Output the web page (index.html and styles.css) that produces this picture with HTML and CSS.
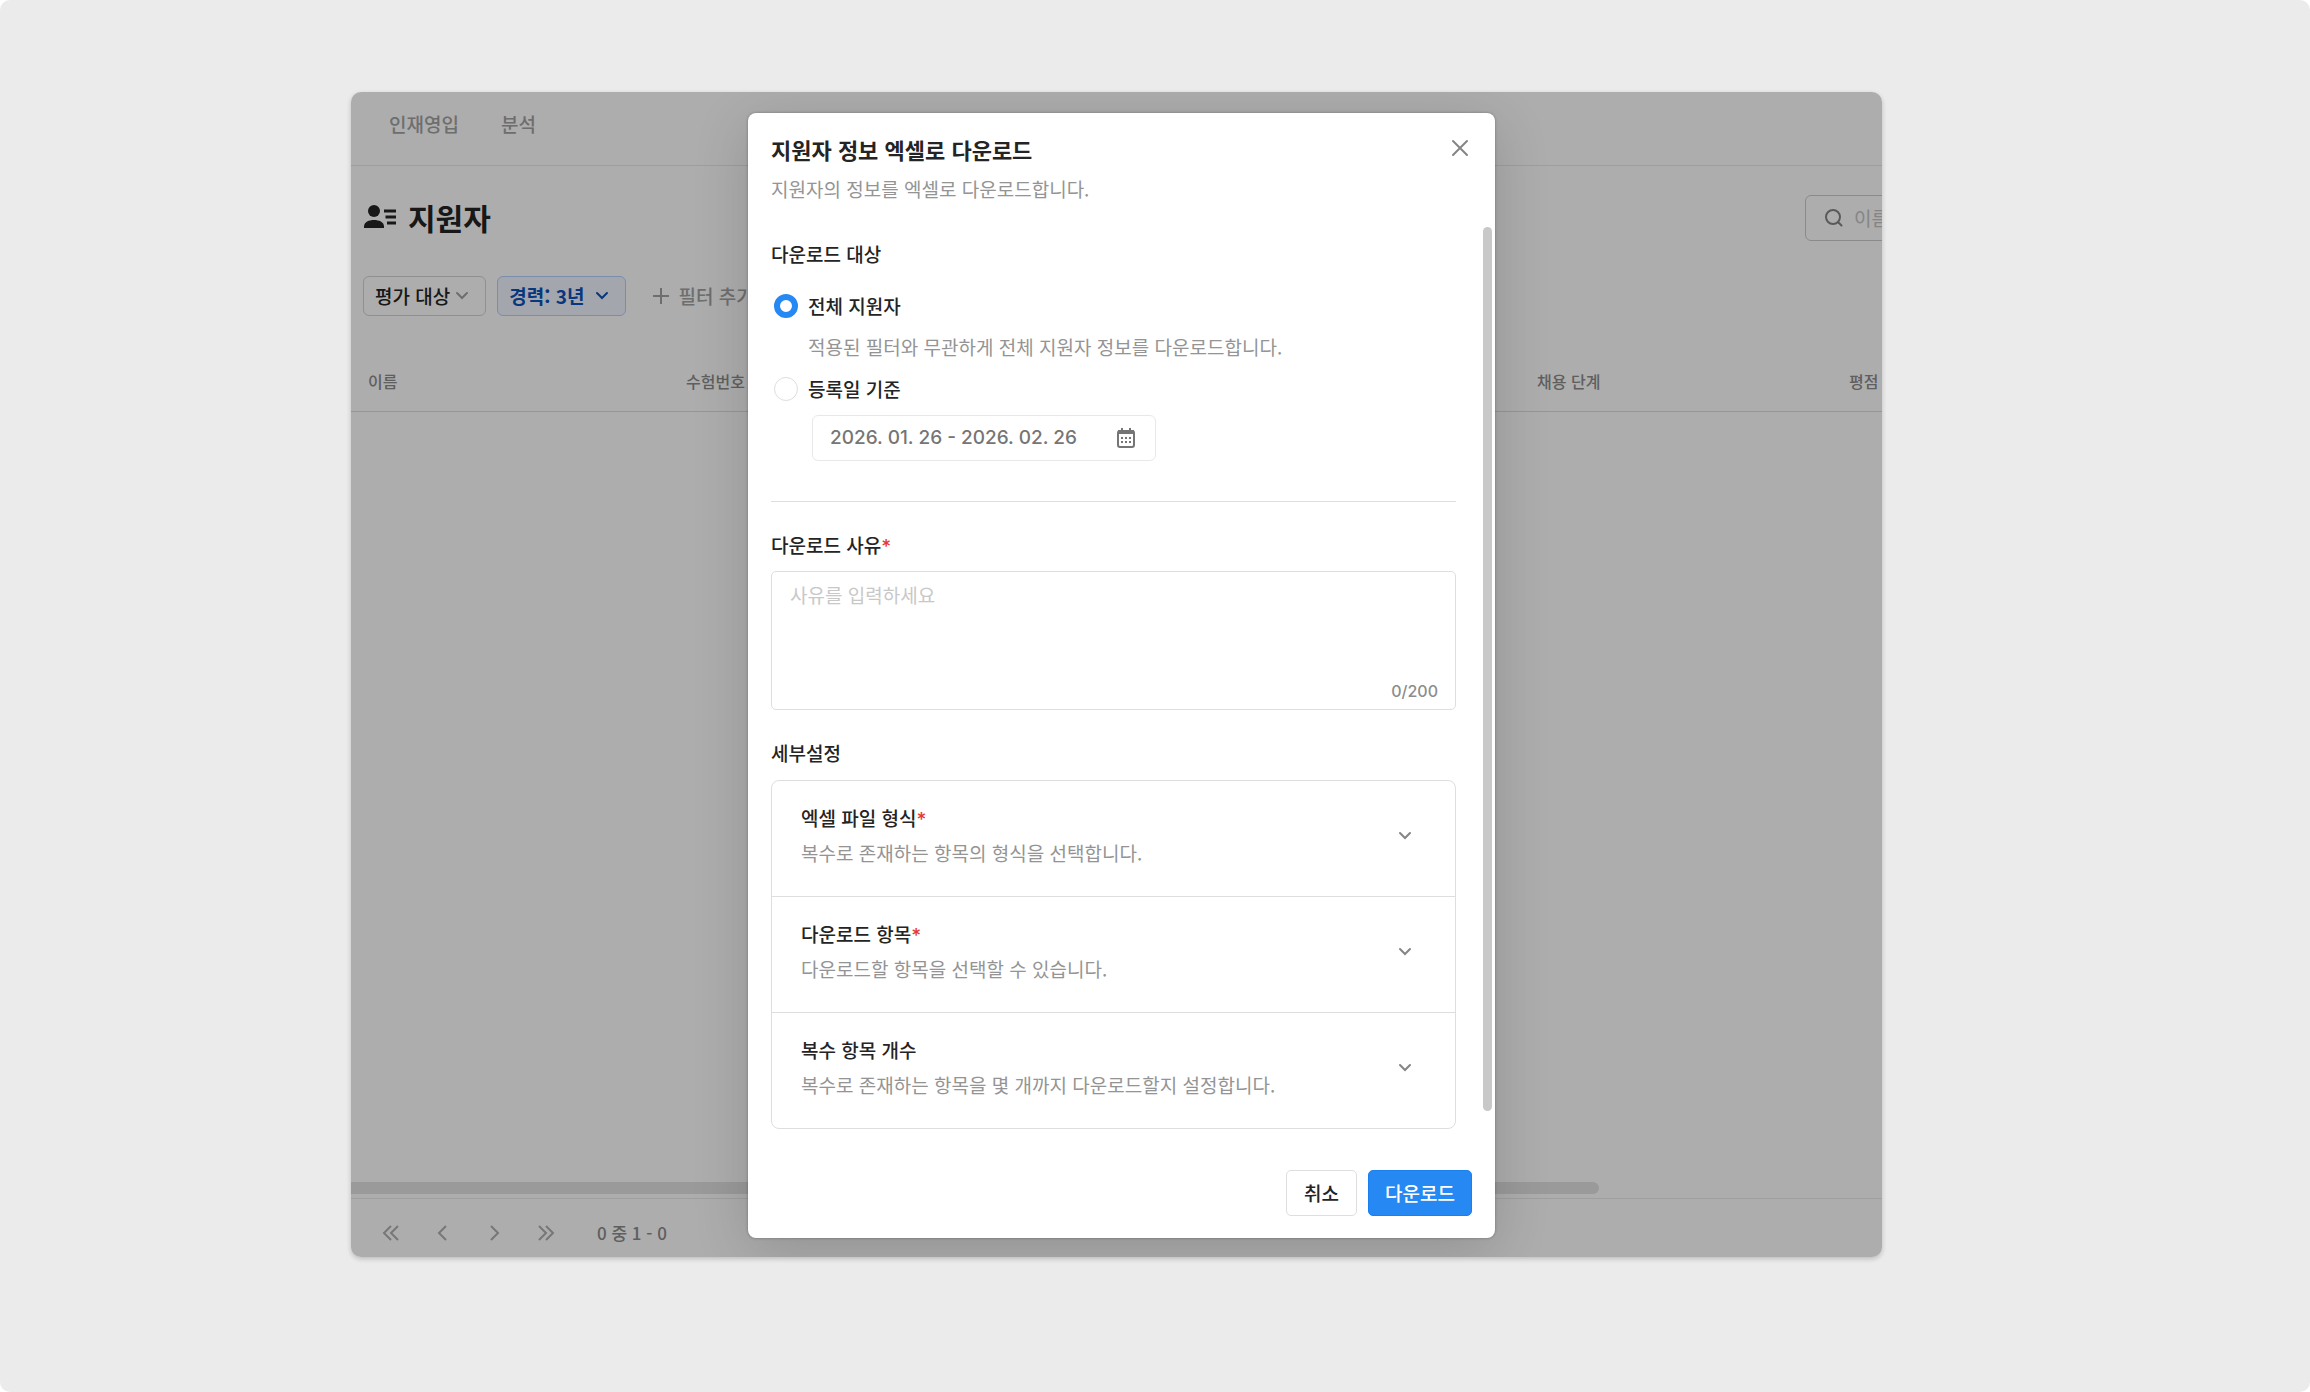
FILE: index.html
```html
<!DOCTYPE html>
<html lang="ko">
<head>
<meta charset="utf-8">
<meta name="viewport" content="width=device-width, initial-scale=1">
<title>지원자 정보 엑셀로 다운로드</title>
<link rel="stylesheet" href="styles.css">
</head>
<body>
<div class="stage">
  <div class="window">
    <nav class="topnav">
      <a href="#recruit">인재영입</a>
      <a href="#analysis">분석</a>
    </nav>

    <header class="page-head">
      <h1 class="page-title">
        <svg width="34" height="28" viewBox="0 0 34 28" fill="currentColor" aria-hidden="true"><circle cx="11" cy="8" r="6"/><path d="M1 25v-1.500c0-4.500 5-6.500 10-6.500s10 2 10 6.500V25z"/><path d="M21 6.500h12v3H21zM22.500 12.500H33v3H22.500zM24 18.500h9v3h-9z"/></svg>
        지원자
      </h1>
      <label class="search">
        <svg width="20" height="20" viewBox="0 0 20 20" fill="none" stroke="currentColor" stroke-width="2" stroke-linecap="round" aria-hidden="true"><circle cx="9" cy="9" r="7"/><path d="m14.500 14.500 3 3"/></svg>
        <input type="search" placeholder="이름" aria-label="이름 검색">
      </label>
    </header>

    <div class="filters">
      <button type="button" class="chip">평가 대상<svg width="14" height="10" viewBox="0 0 14 10" fill="none" stroke="currentColor" stroke-width="2" stroke-linecap="round" aria-hidden="true"><path d="m2 2 5 5 5-5"/></svg></button>
      <button type="button" class="chip chip-on">경력: 3년<svg width="14" height="10" viewBox="0 0 14 10" fill="none" stroke="currentColor" stroke-width="2" stroke-linecap="round" aria-hidden="true"><path d="m2 2 5 5 5-5"/></svg></button>
      <button type="button" class="add-filter"><svg width="18" height="18" viewBox="0 0 18 18" fill="none" stroke="currentColor" stroke-width="2" aria-hidden="true"><path d="M9 1v16M1 9h16"/></svg>필터 추가</button>
    </div>

    <table class="applicants">
      <thead>
        <tr><th class="col-name">이름</th><th>수험번호</th><th class="col-step">채용 단계</th><th class="col-score">평점</th></tr>
      </thead>
    </table>

    <div class="table-space"></div>
    <div class="h-scroll"></div>

    <footer class="pager">
      <button type="button" aria-label="처음"><svg width="18" height="18" viewBox="0 0 18 18" fill="none" stroke="currentColor" stroke-width="2" aria-hidden="true"><path d="M9 2 2 9l7 7M16 2 9 9l7 7"/></svg></button>
      <button type="button" aria-label="이전"><svg width="18" height="18" viewBox="0 0 18 18" fill="none" stroke="currentColor" stroke-width="2" aria-hidden="true"><path d="M12 2 5 9l7 7"/></svg></button>
      <button type="button" aria-label="다음"><svg width="18" height="18" viewBox="0 0 18 18" fill="none" stroke="currentColor" stroke-width="2" aria-hidden="true"><path d="m5 2 7 7-7 7"/></svg></button>
      <button type="button" aria-label="마지막"><svg width="18" height="18" viewBox="0 0 18 18" fill="none" stroke="currentColor" stroke-width="2" aria-hidden="true"><path d="m1 2 7 7-7 7M8 2l7 7-7 7"/></svg></button>
      <span class="pager-count">0 중 1 - 0</span>
    </footer>

    <div class="scrim">
      <form class="modal" role="dialog" aria-labelledby="modal-title">
        <header class="modal-head">
          <div>
            <h2 class="modal-title" id="modal-title">지원자 정보 엑셀로 다운로드</h2>
            <p class="muted">지원자의 정보를 엑셀로 다운로드합니다.</p>
          </div>
          <button type="button" class="close" aria-label="닫기"><svg width="18" height="18" viewBox="0 0 18 18" fill="none" stroke="currentColor" stroke-width="2" stroke-linecap="round" aria-hidden="true"><path d="m2 2 14 14M16 2 2 16"/></svg></button>
        </header>

        <div class="modal-body">
          <section class="target" role="radiogroup" aria-labelledby="target-title">
            <h3 class="label" id="target-title">다운로드 대상</h3>
            <label class="radio"><input type="radio" name="target" checked>전체 지원자</label>
            <p class="muted radio-note">적용된 필터와 무관하게 전체 지원자 정보를 다운로드합니다.</p>
            <label class="radio"><input type="radio" name="target">등록일 기준</label>
            <div class="date">
              <input type="text" value="2026. 01. 26 - 2026. 02. 26" aria-label="등록일 기간" readonly>
              <svg width="20" height="22" viewBox="0 0 20 22" aria-hidden="true"><rect x="2" y="4" width="16" height="16" rx="2" fill="none" stroke="currentColor" stroke-width="2"/><path d="M2 3h16v4H2zM5 1h2v3H5zM13 1h2v3h-2zM5 10h2v2H5zM9 10h2v2H9zM13 10h2v2h-2zM5 14h2v2H5zM9 14h2v2H9zM13 14h2v2h-2z" fill="currentColor"/></svg>
            </div>
          </section>

          <section class="reason">
            <label class="label" for="reason">다운로드 사유<span class="required">*</span></label>
            <div class="reason-box">
              <textarea id="reason" maxlength="200" placeholder="사유를 입력하세요"></textarea>
              <span class="counter">0/200</span>
            </div>
          </section>

          <section class="details">
            <h3 class="label">세부설정</h3>
            <div class="accordion">
              <button type="button" class="item">
                <span class="item-text"><span class="label">엑셀 파일 형식<span class="required">*</span></span><span class="muted">복수로 존재하는 항목의 형식을 선택합니다.</span></span>
                <svg width="14" height="10" viewBox="0 0 14 10" fill="none" stroke="currentColor" stroke-width="2" stroke-linecap="round" aria-hidden="true"><path d="m2 2 5 5 5-5"/></svg>
              </button>
              <button type="button" class="item">
                <span class="item-text"><span class="label">다운로드 항목<span class="required">*</span></span><span class="muted">다운로드할 항목을 선택할 수 있습니다.</span></span>
                <svg width="14" height="10" viewBox="0 0 14 10" fill="none" stroke="currentColor" stroke-width="2" stroke-linecap="round" aria-hidden="true"><path d="m2 2 5 5 5-5"/></svg>
              </button>
              <button type="button" class="item">
                <span class="item-text"><span class="label">복수 항목 개수</span><span class="muted">복수로 존재하는 항목을 몇 개까지 다운로드할지 설정합니다.</span></span>
                <svg width="14" height="10" viewBox="0 0 14 10" fill="none" stroke="currentColor" stroke-width="2" stroke-linecap="round" aria-hidden="true"><path d="m2 2 5 5 5-5"/></svg>
              </button>
            </div>
          </section>
          <div class="v-scroll"></div>
        </div>

        <footer class="modal-foot">
          <button type="button" class="btn">취소</button>
          <button type="submit" class="btn btn-primary">다운로드</button>
        </footer>
      </form>
    </div>
  </div>
</div>
</body>
</html>
```
FILE: styles.css
```css
* {
  box-sizing: border-box;
}

body {
  margin: 0;
  background: #fff;
  color: #242424;
  font-family: "Noto Sans CJK KR", sans-serif;
  font-size: 19px;
  line-height: 28px;
}

h1, h2, h3, p {
  margin: 0;
}

button, input, textarea {
  margin: 0;
  font: inherit;
  color: inherit;
}

button {
  padding: 0;
  border: 0;
  background: none;
  white-space: nowrap;
}

svg {
  flex: none;
  display: block;
}

.stage {
  min-height: 100vh;
  padding: 92px 428px 135px 351px;
  border-radius: 10px;
  background: #ebebeb;
}

/* Application window */
.window {
  position: relative;
  display: flex;
  flex-direction: column;
  overflow: hidden;
  border-radius: 10px;
  background: #fff;
  box-shadow: 0 2px 5px rgba(0, 0, 0, 0.2);
}

.topnav {
  display: flex;
  gap: 42px;
  height: 74px;
  padding: 18px 38px;
  border-bottom: 1px solid #e9e9e9;
}

.topnav a {
  color: #a3a3a3;
  font-weight: 500;
  text-decoration: none;
}

.page-head {
  display: flex;
  align-items: center;
  justify-content: space-between;
  height: 104px;
  padding-left: 12px;
}

.page-title {
  display: flex;
  align-items: center;
  gap: 11px;
  padding-bottom: 2px;
  font-size: 30px;
  font-weight: 700;
  line-height: 40px;
}

.search {
  display: flex;
  align-items: center;
  gap: 10px;
  width: 120px;
  height: 46px;
  margin-right: -43px;
  padding: 0 18px;
  border: 1px solid #ccc;
  border-radius: 6px;
  color: #858585;
}

.search input {
  width: 80px;
  padding: 0;
  border: 0;
  outline: 0;
  background: none;
}

.search input::placeholder {
  color: #c4c4c4;
  opacity: 1;
}

.filters {
  display: flex;
  align-items: center;
  gap: 11px;
  padding: 6px 12px 36px;
}

.chip {
  display: flex;
  align-items: center;
  justify-content: space-between;
  gap: 5px;
  height: 40px;
  padding: 0 16px 0 11px;
  border: 1px solid #d4d4d4;
  border-radius: 6px;
  font-weight: 500;
}

.chip svg {
  color: #a3a3a3;
}

.chip-on {
  gap: 11px;
  border-color: #b4d0ff;
  background: #f0f5ff;
  color: #0c52b8;
  font-weight: 700;
}

.chip-on svg {
  color: #0c52b8;
}

.add-filter {
  display: flex;
  align-items: center;
  gap: 8px;
  padding-left: 15px;
  color: #a3a3a3;
  font-weight: 500;
}

.applicants {
  width: 100%;
  table-layout: fixed;
  border-collapse: collapse;
}

.applicants th {
  height: 59px;
  padding: 0 0 0 17px;
  border-bottom: 1px solid #dedede;
  color: #8c8c8c;
  font-size: 16px;
  font-weight: 500;
  text-align: left;
  white-space: nowrap;
}

.applicants .col-name {
  width: 318px;
}

.applicants .col-step {
  width: 312px;
}

.applicants .col-score {
  width: 50px;
}

.table-space {
  height: 770px;
}

.h-scroll {
  width: 1248px;
  max-width: 100%;
  height: 12px;
  border-radius: 0 6px 6px 0;
  background: #e4e4e4;
}

.pager {
  display: flex;
  align-items: center;
  gap: 34px;
  height: 59px;
  margin-top: 4px;
  padding: 11px 31px 0;
  border-top: 1px solid #ebebeb;
  color: #b0b0b0;
}

.pager-count {
  padding-left: 7px;
  color: #8c8c8c;
  font-size: 17px;
  font-weight: 500;
}

/* Download dialog */
.scrim {
  position: absolute;
  inset: 0;
  display: flex;
  justify-content: center;
  align-items: flex-start;
  padding: 21px 0 0 10px;
  background: rgba(0, 0, 0, 0.32);
}

.modal {
  width: 747px;
  border-radius: 8px;
  background: #fff;
  box-shadow: 0 0 3px rgba(0, 0, 0, 0.3), 0 12px 56px rgba(0, 0, 0, 0.16);
}

.modal-head {
  display: flex;
  justify-content: space-between;
  align-items: flex-start;
  padding: 20px 26px 0 23px;
}

.modal-title {
  margin-bottom: 10px;
  font-size: 22px;
  font-weight: 700;
  line-height: 32px;
}

.muted {
  color: #949494;
  font-weight: 400;
}

.close {
  padding: 6px 0;
  color: #858585;
}

.modal-body {
  position: relative;
  padding: 37px 39px 0 23px;
}

.label {
  color: #242424;
  font-size: 19px;
  font-weight: 500;
}

.required {
  color: #e53935;
  font-family: Inter, sans-serif;
  line-height: 1;
}

.target {
  display: flex;
  flex-direction: column;
  align-items: flex-start;
  padding-bottom: 40px;
  border-bottom: 1px solid #dedede;
}

.radio {
  display: flex;
  align-items: center;
  gap: 10px;
  padding-left: 3px;
  font-weight: 500;
}

.target .label {
  margin-bottom: 24px;
}

.radio input {
  appearance: none;
  width: 24px;
  height: 24px;
  border: 1px solid #dedede;
  border-radius: 50%;
  background: #fff;
}

.radio input:checked {
  border: 6px solid #2688f3;
}

.radio-note {
  margin: 13px 0 14px;
  padding-left: 37px;
}

.date {
  display: flex;
  align-items: center;
  width: 344px;
  height: 46px;
  margin: 12px 0 0 41px;
  padding: 0 19px 0 17px;
  border: 1px solid #e8e8e8;
  border-radius: 6px;
  color: #757575;
}

.date input {
  flex: 1;
  min-width: 0;
  padding: 0;
  border: 0;
  outline: 0;
  background: none;
  font-family: Inter, sans-serif;
  font-weight: 500;
}

.reason,
.details {
  display: flex;
  flex-direction: column;
  gap: 12px;
  padding-top: 29px;
}

.details {
  gap: 13px;
}

.reason-box {
  position: relative;
}

.reason-box textarea {
  display: block;
  width: 100%;
  height: 139px;
  padding: 9px 18px;
  border: 1px solid #dedede;
  border-radius: 5px;
  outline: 0;
  resize: none;
}

.reason-box textarea::placeholder {
  color: #c8c8c8;
  opacity: 1;
}

.counter {
  position: absolute;
  right: 18px;
  bottom: 5px;
  color: #8c8c8c;
  font-family: Inter, sans-serif;
  font-size: 16px;
  font-weight: 500;
}

.accordion {
  border: 1px solid #dedede;
  border-radius: 8px;
}

.item {
  display: flex;
  align-items: center;
  justify-content: space-between;
  width: 100%;
  padding: 23px 43px 29px 29px;
  color: #858585;
  text-align: left;
}

.item + .item {
  border-top: 1px solid #dedede;
}

.item-text {
  display: grid;
  gap: 7px;
}

.v-scroll {
  position: absolute;
  top: 24px;
  right: 3px;
  bottom: 18px;
  width: 9px;
  border-radius: 5px;
  background: #c8c8c8;
}

.modal-foot {
  display: flex;
  justify-content: flex-end;
  gap: 11px;
  padding: 41px 23px 22px;
}

.btn {
  height: 46px;
  padding: 0 17px;
  border: 1px solid #dedede;
  border-radius: 5px;
  font-weight: 500;
}

.btn-primary {
  padding: 0 16px;
  border-color: #1a80f0;
  background: #2688f3;
  color: #fff;
}
```
